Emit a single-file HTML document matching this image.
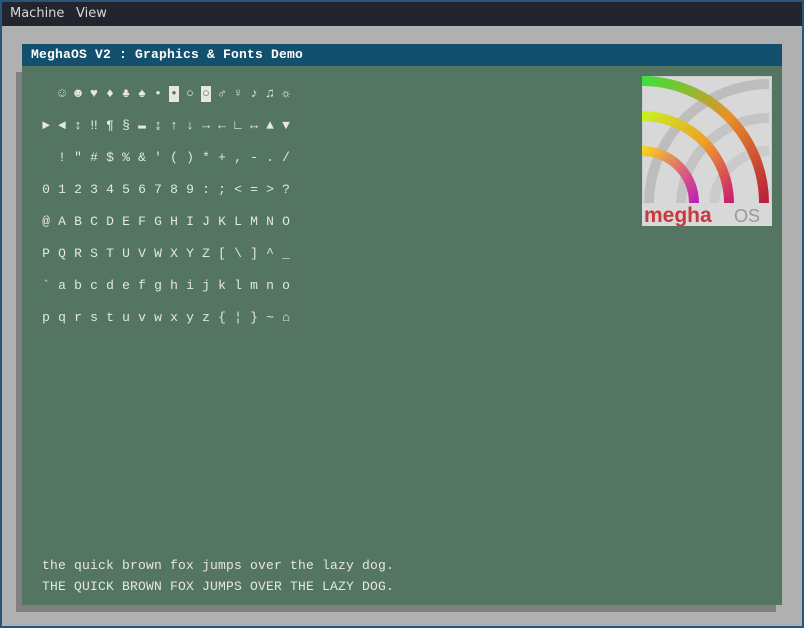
<!DOCTYPE html>
<html><head><meta charset="utf-8"><style>
*{margin:0;padding:0;box-sizing:border-box}
body{width:804px;height:628px;background:#2a5478;position:relative;overflow:hidden;font-family:"Liberation Mono","DejaVu Sans Mono",monospace}
#menu{position:absolute;left:2px;top:2px;width:800px;height:24px;background:#22252e;color:#d8d8d8;font:13px "DejaVu Sans","Liberation Sans",sans-serif;line-height:24px}
#menu span{position:absolute;top:0}
#desk{position:absolute;left:2px;top:26px;width:800px;height:600px;background:#b0b0b0}
#shadow{position:absolute;left:16px;top:72px;width:760px;height:540px;background:#808080}
#win{position:absolute;left:22px;top:44px;width:760px;height:561px;background:#537562}
#title{position:absolute;left:0;top:0;width:760px;height:22px;background:#13506e;color:#fff;font-weight:bold;font-size:13px;line-height:22px;padding-left:9px;letter-spacing:0.2px}
.row{position:absolute;left:16px;height:16px;display:flex;color:#e6e6e6;font-size:13px;line-height:16px}
.row span{width:16px;text-align:center;display:block}
.inv{background:#e6e6e6;color:#537562;width:10px!important;margin:0 3px}
.txt{position:absolute;left:20px;color:#e6e6e6;font-size:13px;line-height:16px;white-space:pre;letter-spacing:0.2px}
</style></head><body>
<div id="menu"><span style="left:8px">Machine</span><span style="left:74px">View</span></div>
<div id="desk"></div>
<div id="shadow"></div>
<div id="win">
<div id="title">MeghaOS V2 : Graphics &amp; Fonts Demo</div>
<div class="row" style="top:42px"><span></span><span>☺</span><span>☻</span><span>♥</span><span>♦</span><span>♣</span><span>♠</span><span>•</span><span class="inv">•</span><span>○</span><span class="inv">○</span><span>♂</span><span>♀</span><span>♪</span><span>♫</span><span>☼</span></div>
<div class="row" style="top:74px"><span>►</span><span>◄</span><span>↕</span><span>‼</span><span>¶</span><span>§</span><span>▬</span><span>↨</span><span>↑</span><span>↓</span><span>→</span><span>←</span><span>∟</span><span>↔</span><span>▲</span><span>▼</span></div>
<div class="row" style="top:106px"><span> </span><span>!</span><span>"</span><span>#</span><span>$</span><span>%</span><span>&amp;</span><span>'</span><span>(</span><span>)</span><span>*</span><span>+</span><span>,</span><span>-</span><span>.</span><span>/</span></div>
<div class="row" style="top:138px"><span>0</span><span>1</span><span>2</span><span>3</span><span>4</span><span>5</span><span>6</span><span>7</span><span>8</span><span>9</span><span>:</span><span>;</span><span>&lt;</span><span>=</span><span>&gt;</span><span>?</span></div>
<div class="row" style="top:170px"><span>@</span><span>A</span><span>B</span><span>C</span><span>D</span><span>E</span><span>F</span><span>G</span><span>H</span><span>I</span><span>J</span><span>K</span><span>L</span><span>M</span><span>N</span><span>O</span></div>
<div class="row" style="top:202px"><span>P</span><span>Q</span><span>R</span><span>S</span><span>T</span><span>U</span><span>V</span><span>W</span><span>X</span><span>Y</span><span>Z</span><span>[</span><span>\</span><span>]</span><span>^</span><span>_</span></div>
<div class="row" style="top:234px"><span>`</span><span>a</span><span>b</span><span>c</span><span>d</span><span>e</span><span>f</span><span>g</span><span>h</span><span>i</span><span>j</span><span>k</span><span>l</span><span>m</span><span>n</span><span>o</span></div>
<div class="row" style="top:266px"><span>p</span><span>q</span><span>r</span><span>s</span><span>t</span><span>u</span><span>v</span><span>w</span><span>x</span><span>y</span><span>z</span><span>{</span><span>¦</span><span>}</span><span>~</span><span>⌂</span></div>
<div class="txt" style="top:514px">the quick brown fox jumps over the lazy dog.</div>
<div class="txt" style="top:535px">THE QUICK BROWN FOX JUMPS OVER THE LAZY DOG.</div>
<svg style="position:absolute;left:620px;top:32px" width="130" height="150" viewBox="0 0 130 150">
<defs>
<linearGradient id="g1" x1="0" y1="0" x2="1" y2="1"><stop offset="0" stop-color="#3ee03a"/><stop offset="0.5" stop-color="#e8902a"/><stop offset="1" stop-color="#b8203a"/></linearGradient>
<linearGradient id="g2" x1="0" y1="0" x2="1" y2="1"><stop offset="0" stop-color="#c8f020"/><stop offset="0.5" stop-color="#f0a028"/><stop offset="1" stop-color="#c82070"/></linearGradient>
<linearGradient id="g3" x1="0" y1="0" x2="1" y2="1"><stop offset="0" stop-color="#f8d020"/><stop offset="0.5" stop-color="#e07070"/><stop offset="1" stop-color="#c020b0"/></linearGradient>
</defs>
<rect x="0" y="0" width="130" height="150" fill="#d8d8d8" stroke="#c0c0c0"/>
<g fill="none" stroke-width="10">
<path d="M127 8 A120 120 0 0 0 7 127" stroke="#bdbdbd"/>
<path d="M127 42 A88 88 0 0 0 39 127" stroke="#c4c4c4"/>
<path d="M127 75 A55 55 0 0 0 72 127" stroke="#cbcbcb"/>
<path d="M0 5 A122 122 0 0 1 122 127" stroke="url(#g1)"/>
<path d="M0 40 A87 87 0 0 1 87 127" stroke="url(#g2)"/>
<path d="M0 75 A52 52 0 0 1 52 127" stroke="url(#g3)"/>
</g>
<rect x="0" y="127" width="130" height="23" fill="#d8d8d8"/>
<text x="2" y="146" font-family="Liberation Sans,sans-serif" font-weight="bold" font-size="21" fill="#c8383e">megha</text>
<text x="92" y="146" font-family="Liberation Sans,sans-serif" font-size="18" fill="#999">OS</text>
</svg>
</div>
</body></html>
